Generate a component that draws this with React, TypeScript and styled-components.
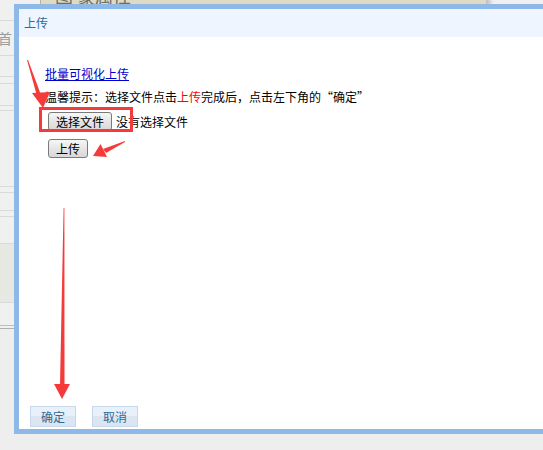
import React from 'react'
import styled, { createGlobalStyle } from 'styled-components'

const GlobalStyle = createGlobalStyle`
  html, body {
    margin: 0;
    padding: 0;
    background: #eeeeee;
  }
  body {
    font-family: 'Noto Sans CJK SC', 'Liberation Sans', sans-serif;
    font-size: 12px;
  }
`

const SIDE_ROWS: { h: number; shaded?: boolean; label?: string; line?: string }[] = [
  { h: 17 },
  { h: 35, label: '首' },
  { h: 21 },
  { h: 7 },
  { h: 22 },
  { h: 5 },
  { h: 76 },
  { h: 6 },
  { h: 18 },
  { h: 6 },
  { h: 27 },
  { h: 59, shaded: true },
  { h: 23, line: '#bdbdbd' },
  { h: 3, line: '#b0b0b0' },
]

export default function App() {
  return (
    <>
      <GlobalStyle />
      <Page>
        <Backdrop>
          <TopRow>
            <TanBar>
              <TanText>图 豪属性</TanText>
            </TanBar>
          </TopRow>
          <Sidebar>
            {SIDE_ROWS.map((r, i) => (
              <SideRow key={i} $h={r.h} $shaded={r.shaded} $line={r.line}>
                {r.label && <SideLabel>{r.label}</SideLabel>}
              </SideRow>
            ))}
          </Sidebar>
        </Backdrop>

        <Dialog>
          <TitleBar>上传</TitleBar>
          <Body>
            <BatchLink href="#">批量可视化上传</BatchLink>
            <Hint>
              温馨提示：选择文件点击<Red>上传</Red>完成后，点击左下角的“确定”
            </Hint>
            <FileRow>
              <NativeButton>选择文件</NativeButton>
              <FileName>没有选择文件</FileName>
            </FileRow>
            <UploadRow>
              <NativeButton>上传</NativeButton>
            </UploadRow>
          </Body>
          <Footer>
            <DialogButton>确定</DialogButton>
            <DialogButton>取消</DialogButton>
          </Footer>
        </Dialog>

        <Annotations width="543" height="450" viewBox="0 0 543 450">
          <rect x="40.5" y="108.5" width="91" height="22" fill="none" stroke="#f53a3a" strokeWidth="3" />
          {/* arrow to the link / file button */}
          <polygon points="27,60 28,60 41,95 37,96" fill="#f53a3a" />
          <polygon points="32,93 50,92 43,108" fill="#f53a3a" />
          {/* arrow to upload button */}
          <polygon points="125,141 125,142 106,153 103,149" fill="#f53a3a" />
          <polygon points="93,156 100.5,144 107,157" fill="#f53a3a" />
          {/* arrow to 确定 */}
          <polygon points="63.6,208 64.4,208 64.5,385 60,385" fill="#f53a3a" />
          <polygon points="54,384 70,384 62,399" fill="#f53a3a" />
        </Annotations>
      </Page>
    </>
  )
}

const Page = styled.div`
  position: relative;
  width: 543px;
  height: 450px;
  overflow: hidden;
  background: #eeeeee;
`

const Backdrop = styled.div`
  display: flex;
  flex-direction: column;
`

const TopRow = styled.div`
  height: 4px;
  display: flex;
  padding-left: 40px;
  background: #f0f0f0;
`

const TanBar = styled.div`
  width: 445px;
  height: 4px;
  overflow: hidden;
  background: #dedac4;
  border-left: 1px solid #b8b49c;
  box-shadow: 4px 0 4px rgba(0, 0, 0, 0.35);
`

const TanText = styled.div`
  margin-top: -14px;
  padding-left: 14px;
  font-size: 18px;
  line-height: 18px;
  color: #6d6d60;
`

const Sidebar = styled.div`
  width: 14px;
  display: flex;
  flex-direction: column;
  background: #f0f0f0;
`

const SideRow = styled.div<{ $h: number; $shaded?: boolean; $line?: string }>`
  height: ${(p) => p.$h}px;
  box-sizing: border-box;
  border-bottom: 1px solid ${(p) => p.$line ?? '#d9d9d9'};
  background: ${(p) => (p.$shaded ? '#e8e8e3' : 'transparent')};
  overflow: hidden;
  display: flex;
  align-items: center;
`

const SideLabel = styled.span`
  font-size: 14px;
  color: #9a9a9a;
  margin-left: -2px;
`

const Dialog = styled.div`
  position: absolute;
  left: 14px;
  top: 4px;
  width: 580px;
  height: 430px;
  box-sizing: border-box;
  border: 5px solid #8db8e8;
  background: #ffffff;
  display: flex;
  flex-direction: column;
`

const TitleBar = styled.div`
  height: 28px;
  line-height: 28px;
  padding-left: 5px;
  background: #eff5fe;
  color: #2b6c9b;
  font-size: 12px;
`

const Body = styled.div`
  flex: 1;
  padding: 27px 0 0 26px;
  color: #000;
  font-size: 12px;
`

const BatchLink = styled.a`
  display: block;
  width: max-content;
  line-height: 20px;
  color: #0000cc;
  text-decoration: underline;
`

const Hint = styled.div`
  margin-top: 3px;
  line-height: 20px;
`

const Red = styled.span`
  color: #ff0000;
`

const FileRow = styled.div`
  display: flex;
  align-items: center;
  gap: 4px;
  margin-top: 5px;
  padding-left: 3px;
`

const UploadRow = styled.div`
  margin-top: 8px;
  padding-left: 3px;
`

const NativeButton = styled.button`
  height: 19px;
  padding: 0 7px;
  border: 1px solid #7a7a7a;
  border-radius: 3px;
  background: linear-gradient(#f7f7f7, #e4e4e4 55%, #d8d8d8);
  font-family: 'Noto Sans CJK SC', 'Liberation Sans', sans-serif;
  font-size: 12px;
  line-height: 16px;
  color: #000;
`

const FileName = styled.span`
  line-height: 19px;
`

const Footer = styled.div`
  display: flex;
  gap: 16px;
  padding: 0 0 2px 11px;
`

const DialogButton = styled.button`
  width: 46px;
  height: 21px;
  padding: 0;
  border: 1px solid #c6d8ea;
  background: linear-gradient(#e8f0fa 0%, #e8f0fa 50%, #dce6f2 50%, #dce6f2 100%);
  font-family: 'Noto Sans CJK SC', 'Liberation Sans', sans-serif;
  font-size: 12px;
  color: #2f6a93;
`

const Annotations = styled.svg`
  position: absolute;
  left: 0;
  top: 0;
  pointer-events: none;
`
